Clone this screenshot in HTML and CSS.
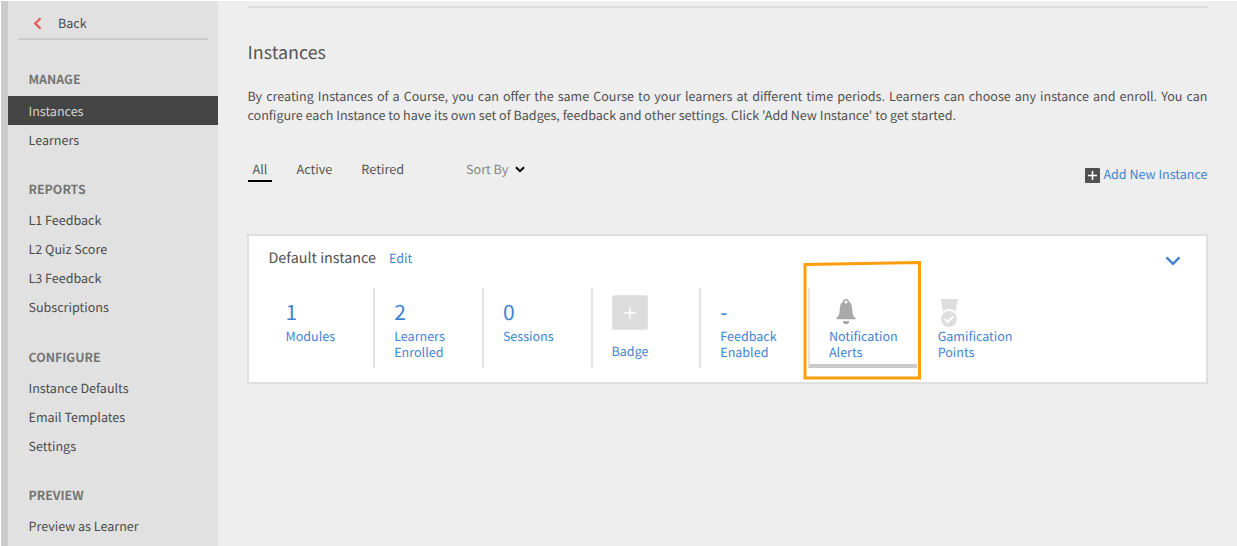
FILE: index.html
```html
<!DOCTYPE html>
<html lang="en">
<head>
<meta charset="utf-8">
<title>Instances</title>
<link rel="stylesheet" href="styles.css">
</head>
<body>
<div class="app">
  <nav class="sidebar">
    <a class="back">
      <svg class="back-icon" width="9" height="13" viewBox="0 0 9 13"><path d="M7.500 1.200 2.200 6.400l5.300 5.200" fill="none" stroke="#e8595b" stroke-width="2.200"/></svg>
      <span>Back</span>
    </a>
    <section class="group"><h2>MANAGE</h2><a class="item active">Instances</a><a class="item">Learners</a></section>
    <section class="group"><h2>REPORTS</h2><a class="item">L1 Feedback</a><a class="item">L2 Quiz Score</a><a class="item">L3 Feedback</a><a class="item">Subscriptions</a></section>
    <section class="group"><h2>CONFIGURE</h2><a class="item">Instance Defaults</a><a class="item">Email Templates</a><a class="item">Settings</a></section>
    <section class="group"><h2>PREVIEW</h2><a class="item">Preview as Learner</a></section>
  </nav>
  <main class="content">
    <h1>Instances</h1>
    <p class="intro">By creating Instances of a Course, you can offer the same Course to your learners at different time periods. Learners can choose any instance and enroll. You can configure each Instance to have its own set of Badges, feedback and other settings. Click 'Add New Instance' to get started.</p>
    <div class="toolbar">
      <div class="tabs"><a class="tab selected">All</a><a class="tab">Active</a><a class="tab">Retired</a></div>
      <div class="sort"><span>Sort By</span><svg width="10" height="7" viewBox="0 0 10 7"><path d="M1 1.200 5 5.200 9 1.200" fill="none" stroke="#000" stroke-width="2"/></svg></div>
      <a class="add"><svg width="15" height="15" viewBox="0 0 15 15"><rect width="15" height="15" rx="1" fill="#505050"/><path d="M7.500 3v9M3 7.500h9" stroke="#fff" stroke-width="1.600"/></svg><span>Add New Instance</span></a>
    </div>
    <section class="card">
      <header class="card-head"><h3>Default instance</h3><a class="edit">Edit</a><svg class="toggle" width="16" height="10" viewBox="0 0 16 10"><path d="M1.500 1.300 8 7.800l6.500-6.500" fill="none" stroke="#3f84d2" stroke-width="2.500"/></svg></header>
      <div class="stats">
        <div class="stat"><div class="figure">1</div><div class="label">Modules</div></div>
        <div class="stat"><div class="figure">2</div><div class="label">Learners<br>Enrolled</div></div>
        <div class="stat"><div class="figure">0</div><div class="label">Sessions</div></div>
        <div class="stat badge"><svg width="36" height="35" viewBox="0 0 36 35"><rect x=".5" y=".5" width="35" height="34" rx="1.500" fill="#dcdcdc" stroke="#e4e4e4"/><path d="M18 12.500v11M12.500 18h11" stroke="#f8f8f6" stroke-width="1.800"/></svg><div class="label">Badge</div></div>
        <div class="stat"><div class="figure">-</div><div class="label">Feedback<br>Enabled</div></div>
        <div class="stat current">
          <div class="figure icon"><svg width="20" height="26" viewBox="0 0 20 26"><path fill="#a9a9a9" fill-rule="evenodd" d="M10 0a3.100 3.100 0 0 1 3.100 2.800C15.500 4 16 6.500 16.200 10c.2 4.500.8 7 3.500 9v1.200H.3V19c2.700-2 3.300-4.500 3.500-9C4 6.500 4.500 4 6.900 2.800A3.100 3.100 0 0 1 10 0Zm0 1.500a1.500 1.500 0 1 0 0 3 1.500 1.500 0 0 0 0-3ZM6.800 22h6.400a3.200 3.200 0 0 1-6.400 0Z"/></svg></div>
          <div class="label">Notification<br>Alerts</div>
          <svg class="callout" width="119" height="121" viewBox="0 0 119 121"><path d="M2 4.500 116.500 2.500V118H2Z" fill="none" stroke="#ff9d0a" stroke-width="3"/></svg>
        </div>
        <div class="stat"><div class="figure icon"><svg width="20" height="29" viewBox="0 0 20 29"><path d="M1.500 0h17.500l-2.600 12.500a9 9 0 0 0-12.300 0Z" fill="#dedede"/><circle cx="10" cy="20" r="8" fill="#dedede"/><path d="m5.800 20 3 3 5.600-5.600" fill="none" stroke="#fff" stroke-width="2"/></svg></div><div class="label">Gamification<br>Points</div></div>
      </div>
    </section>
  </main>
</div>
</body>
</html>
```
FILE: styles.css
```css
* { box-sizing: border-box; }
body { margin: 0; background: #fff; font-family: "Noto Sans CJK SC", sans-serif; font-size: 12.55px; color: #4b4b4b; text-rendering: geometricPrecision; }
h1, h2, h3, p { margin: 0; font-weight: 400; }
.app { display: flex; height: 546px; padding: 1px 0 0 1px; overflow: hidden; }
.sidebar { width: 216.5px; flex: none; background: #e1e1e1; border-left: 7px solid #cbcbcb; }
.back { display: flex; align-items: center; height: 39px; margin: 0 10px; padding: 7px 0 0 15px; border-bottom: 2px solid #cacaca; line-height: 20px; }
.back-icon { margin-right: 16px; }
.group { margin-bottom: 18px; }
.back + .group { margin-top: 22px; }
.group h2 { padding-left: 20.500px; line-height: 34px; font-size: 12.4px; font-weight: 700; color: #747474; }
.group + .group h2 { padding-top: 1px; line-height: 32px; }
.item { display: block; padding-left: 20.500px; line-height: 29px; }
.item.active { background: #444; color: #d5d5d5; }
.group:nth-of-type(3) { padding-top: .5px; }
.content { flex: 1; background: #eee; padding: 5px 29.500px 0 30px; }
.content h1 { border-top: 2px solid #dcdcdc; padding-top: 29px; line-height: 30px; font-size: 17.9px; color: #555; }
.intro { margin-top: 19px; line-height: 19px; text-align: justify; color: #505050; }
.toolbar { display: flex; margin-top: 32px; height: 77.500px; line-height: 25px; }
.tabs { display: flex; gap: 24px; height: 26px; font-size: 12.7px; color: #555; }
.tab:last-child { margin-left: 5px; }
.selected { padding: 0 5px; border-bottom: 2px solid #000; }
.sort { display: flex; align-items: center; gap: 7px; height: 25px; margin-left: 62px; color: #858585; }
.sort svg { margin-top: 1px; }
.add { display: flex; align-items: center; gap: 3px; height: 25px; margin: 5px 0 0 auto; color: #3f84d2; }
.add svg { margin-top: 3px; }
.card { margin-left: -.5px; background: #fff; border: 2px solid #dfdfdf; height: 150px; }
.card-head { display: flex; align-items: center; height: 43px; padding: 0 25px 0 19.500px; }
.card-head h3 { font-size: 14.35px; color: #505050; }
.edit { margin-left: 13px; color: #3f84d2; }
.toggle { margin: 8px 0 0 auto; }
.stats { display: flex; height: 80px; margin: 9px 0 0 15.500px; }
.stat { position: relative; width: 108.700px; padding-left: 19px; border-left: 2px solid #e3e3e3; color: #3f84d2; }
.stat:first-child { border-color: transparent; }
.stat:last-child { border-left: 2px solid transparent; }
.figure { height: 40px; padding-top: 9px; font-size: 21px; line-height: 30px; }
.icon { padding: 11px 0 0 7.500px; line-height: 0; }
.stat:last-child .icon { padding-left: 1px; }
.label { line-height: 16px; }
.badge { padding-top: 7px; }
.badge svg { display: block; margin-bottom: 13px; }
.current { border-bottom: 4px solid #c9c9c9; }
.callout { position: absolute; left: -7px; top: -28px; }
```
